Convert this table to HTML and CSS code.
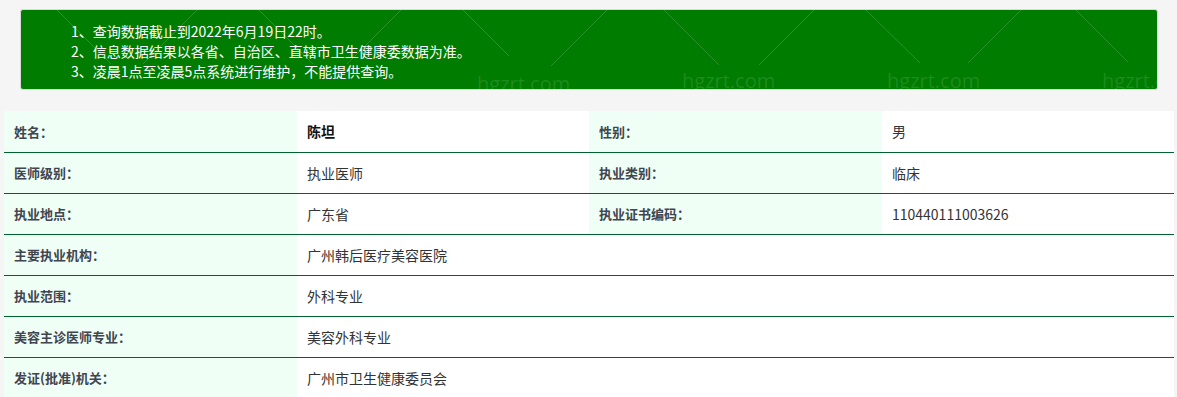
FILE: index.html
```html
<!DOCTYPE html>
<html lang="zh-CN">
<head>
<meta charset="utf-8">
<title>医师执业信息查询</title>
<link rel="stylesheet" href="styles.css">
</head>
<body>
<div class="page">
  <div class="notice">
    <ol class="notice-list">
      <li>1、查询数据截止到2022年6月19日22时。</li>
      <li>2、信息数据结果以各省、自治区、直辖市卫生健康委数据为准。</li>
      <li>3、凌晨1点至凌晨5点系统进行维护，不能提供查询。</li>
    </ol>
    <svg class="wm-lines" width="1138" height="81" viewBox="0 0 1138 81">
      <g stroke="rgba(255,255,255,0.16)" stroke-width="1" fill="none">
        <line x1="36" y1="0" x2="90" y2="54"/>
        <line x1="122" y1="54" x2="176" y2="0"/>
        <line x1="238" y1="0" x2="292" y2="54"/>
        <line x1="326" y1="54" x2="380" y2="0"/>
        <line x1="442" y1="0" x2="488" y2="46"/>
        <line x1="530" y1="56" x2="586" y2="0"/>
        <line x1="643" y1="0" x2="698" y2="55"/>
        <line x1="738" y1="55" x2="793" y2="0"/>
        <line x1="845" y1="0" x2="899" y2="53"/>
        <line x1="947" y1="53" x2="1000" y2="0"/>
        <line x1="1055" y1="0" x2="1107" y2="52"/>
      </g>
    </svg>
    <span class="wm wm1">hgzrt.com</span>
    <span class="wm wm2">hgzrt.com</span>
    <span class="wm wm3">hgzrt.com</span>
    <span class="wm wm4">hgzrt.com</span>
  </div>

  <table class="info">
    <colgroup>
      <col class="c1"><col class="c2"><col class="c3"><col class="c4">
    </colgroup>
    <tr>
      <th>姓名：</th><td class="strong">陈坦</td>
      <th>性别：</th><td>男</td>
    </tr>
    <tr>
      <th>医师级别：</th><td>执业医师</td>
      <th>执业类别：</th><td>临床</td>
    </tr>
    <tr>
      <th>执业地点：</th><td>广东省</td>
      <th>执业证书编码：</th><td>110440111003626</td>
    </tr>
    <tr>
      <th>主要执业机构：</th><td colspan="3">广州韩后医疗美容医院</td>
    </tr>
    <tr>
      <th>执业范围：</th><td colspan="3">外科专业</td>
    </tr>
    <tr>
      <th>美容主诊医师专业：</th><td colspan="3">美容外科专业</td>
    </tr>
    <tr>
      <th>发证(批准)机关：</th><td colspan="3">广州市卫生健康委员会</td>
    </tr>
  </table>
</div>
</body>
</html>
```

FILE: styles.css
```css
html, body {
  margin: 0;
  padding: 0;
  background: #f5f5f5;
  font-family: "Noto Sans CJK SC", "Microsoft YaHei", "Noto Sans", sans-serif;
  color: #333;
}

.page {
  padding: 9px 3px 0 4px;
}

.notice {
  position: relative;
  overflow: hidden;
  margin: 0 16px 0 16px;
  height: 81px;
  box-sizing: border-box;
  background: #007c00;
  border: 1px solid #d9d9d9;
  border-radius: 3px;
  padding: 11px 0 0 50px;
}

.notice-list {
  list-style: none;
  margin: 0;
  padding: 0;
  color: #fff;
  font-size: 14px;
  line-height: 20px;
}

.wm-lines {
  position: absolute;
  left: 0;
  top: 0;
  pointer-events: none;
}

.wm {
  position: absolute;
  font-family: "Open Sans", "Noto Sans", sans-serif;
  font-size: 20px;
  line-height: 20px;
  color: rgba(255, 255, 255, 0.12);
  pointer-events: none;
}
.wm1 { left: 456px; top: 64px; }
.wm2 { left: 661px; top: 61px; }
.wm3 { left: 866px; top: 61px; }
.wm4 { left: 1081px; top: 61px; }

.info {
  margin-top: 21px;
  width: 1170px;
  border-collapse: collapse;
  table-layout: fixed;
  font-size: 14px;
}

.info col.c1 { width: 293px; }
.info col.c2 { width: 292px; }
.info col.c3 { width: 293px; }
.info col.c4 { width: 292px; }

.info tr {
  height: 41px;
  border-bottom: 1px solid #00632f;
}
.info tr:last-child {
  border-bottom: none;
}

.info th,
.info td {
  padding: 0 10px;
  height: 40px;
  text-align: left;
  vertical-align: middle;
  white-space: nowrap;
}

.info th {
  background: #effff6;
  color: #404550;
  font-weight: bold;
  font-size: 13px;
}

.info td {
  background: #fff;
  color: #333;
  font-weight: normal;
}

.info td.strong {
  color: #111;
  font-weight: bold;
}
```
